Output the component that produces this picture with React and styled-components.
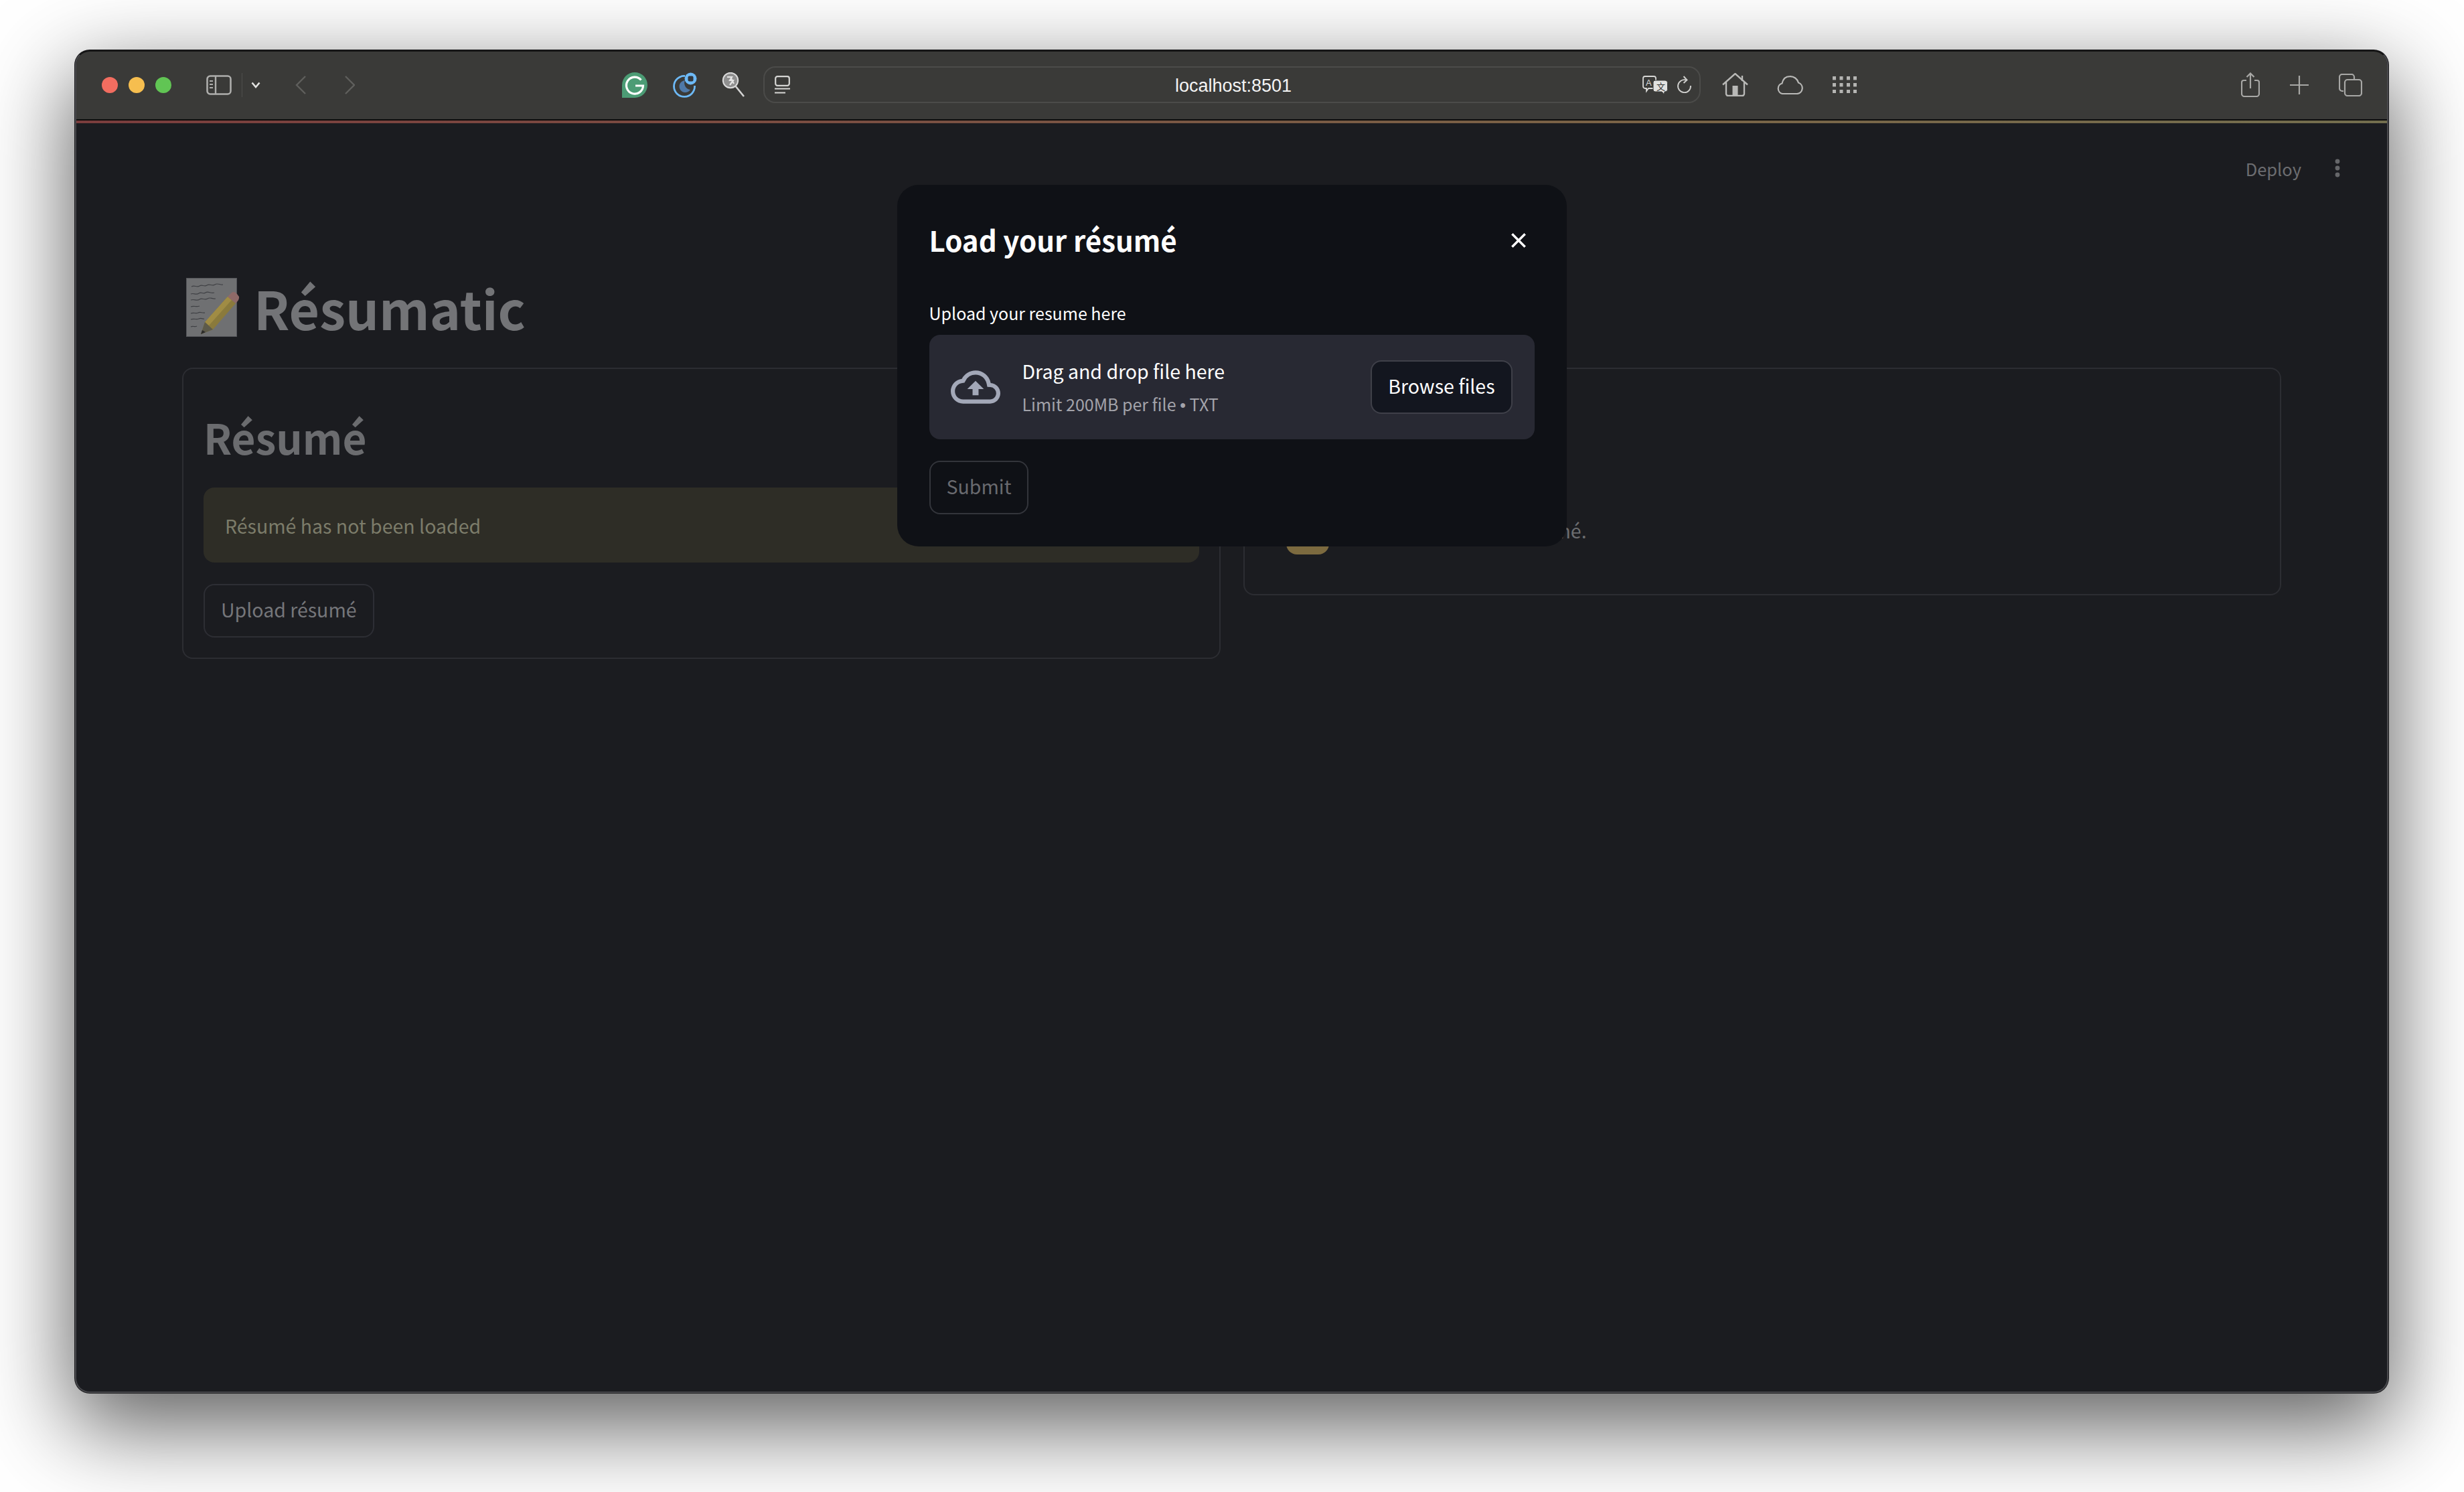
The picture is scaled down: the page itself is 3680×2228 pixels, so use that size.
import React from 'react';
import styled, { createGlobalStyle } from 'styled-components';

const GlobalStyle = createGlobalStyle`
  html, body {
    margin: 0;
    padding: 0;
    background: #fff;
  }
  * {
    box-sizing: border-box;
  }
  body {
    font-family: "Noto Sans CJK SC", "Noto Sans", sans-serif;
    -webkit-font-smoothing: antialiased;
  }
`;

const Stage = styled.div`
  width: 3680px;
  height: 2228px;
  padding: 75px 113px 148px 112px;
  overflow: hidden;
`;

const Window = styled.div`
  height: 100%;
  display: flex;
  flex-direction: column;
  position: relative;
  background: #1b1c20;
  border: 2px solid #48484c;
  border-top-color: #141414;
  border-radius: 22px;
  box-shadow: 0 0 0 1px #1c1c1e, 0 44px 130px 8px rgba(0, 0, 0, 0.62);
  overflow: hidden;
`;

const Toolbar = styled.header`
  flex: none;
  height: 103px;
  display: flex;
  align-items: center;
  padding: 0 36px 2px 38px;
  background: #3a3a38;
  border-bottom: 2px solid #0c0c0c;
`;

const Lights = styled.div`
  display: flex;
  gap: 16px;
`;

const Light = styled.span`
  width: 24px;
  height: 24px;
  border-radius: 50%;
  background: ${({ $color }) => $color};
`;

const ToolIcon = styled.svg`
  flex: none;
  display: block;
  margin-left: ${({ $gap }) => $gap || 0}px;
`;

const Separator = styled.span`
  flex: none;
  width: 1px;
  height: 36px;
  margin-left: 15px;
  background: #4e4e4c;
`;

const AddressBar = styled.div`
  flex: none;
  width: 1400px;
  height: 55px;
  margin-left: 28px;
  padding: 0 11px 0 15px;
  display: grid;
  grid-template-columns: 1fr auto 1fr;
  align-items: center;
  border: 2px solid #4b4b49;
  border-radius: 18px;
`;

const Url = styled.span`
  padding-top: 3px;
  font-family: "Liberation Sans", Arial, sans-serif;
  font-size: 27px;
  color: #f4f4f4;
`;

const AddressEnd = styled.div`
  display: flex;
  justify-content: flex-end;
  align-items: center;
`;

const Decoration = styled.div`
  flex: none;
  height: 4px;
  background: linear-gradient(90deg, #7b3d3d 0%, #7a4f42 35%, #7a6246 65%, #736e4e 100%);
`;

const Page = styled.main`
  flex: 1;
  min-height: 0;
  padding: 0 158px;
  color: #6c6d70;
`;

const TopBar = styled.div`
  height: 134px;
  margin-right: -158px;
  padding-right: 70px;
  display: flex;
  justify-content: flex-end;
  align-items: center;
  gap: 50px;
  font-size: 25.5px;
  color: #6c6d70;
`;

const TitleRow = styled.div`
  height: 142px;
  margin-top: 70px;
  margin-bottom: 19px;
  display: flex;
  align-items: center;
  gap: 21px;
  padding-left: 6px;
`;

const Title = styled.h1`
  margin: 0;
  font-size: 78.5px;
  line-height: 142px;
  font-weight: 700;
  color: #737477;
`;

const Columns = styled.div`
  display: grid;
  grid-template-columns: 1fr 1fr;
  gap: 34px;
  align-items: start;
`;

const Card = styled.section`
  display: flex;
  flex-direction: column;
  height: ${({ $height }) => $height}px;
  justify-content: flex-end;
  padding: 0 30px 30px;
  border: 2px solid #2c2d32;
  border-radius: 16px;
`;

const CardTitle = styled.h2`
  margin: 0 0 26px;
  font-size: 62px;
  line-height: 100px;
  font-weight: 700;
  color: #6b6c6f;
`;

const Alert = styled.div`
  height: 112px;
  margin-bottom: 32px;
  padding: 0 32px;
  display: flex;
  align-items: center;
  background: #2e2d26;
  border-radius: 16px;
  font-size: 28.5px;
  color: #7c7c6a;
`;

const Button = styled.button`
  flex: none;
  align-self: ${({ $center }) => ($center ? 'center' : 'flex-start')};
  height: 80px;
  padding: 0 24px 3px;
  background: ${({ $bg }) => $bg || 'transparent'};
  border: 2px solid ${({ $line }) => $line || '#2d2e34'};
  border-radius: 16px;
  font-family: inherit;
  font-size: 28.5px;
  line-height: 1;
  color: ${({ $color }) => $color || '#75767a'};
`;

const ChatRow = styled.div`
  display: flex;
  align-items: center;
  gap: 53px;
  margin: 0 0 29px 32px;
  font-size: 28.5px;
  line-height: 48px;
`;

const Avatar = styled.div`
  width: 64px;
  height: 64px;
  background: #7c6a3f;
  border-radius: 16px;
`;

const ChatText = styled.span`
  padding-bottom: 8px;
`;

const Modal = styled.div`
  position: absolute;
  top: 199px;
  left: 50%;
  transform: translateX(-50%);
  width: 1000px;
  height: 540px;
  padding: 48px 48px 48px;
  display: flex;
  flex-direction: column;
  background: #0f1116;
  border-radius: 32px;
  color: #fff;
`;

const ModalHead = styled.div`
  display: flex;
  justify-content: space-between;
  align-items: center;
  margin-bottom: 55px;
`;

const ModalTitle = styled.h3`
  margin: 0;
  font-size: 42px;
  line-height: 68px;
  font-weight: 700;
`;

const CloseIcon = styled.svg`
  margin: 2px 6px 0 0;
  fill: #fff;
  stroke: #fff;
  stroke-width: 0.5;
`;

const FieldLabel = styled.label`
  font-size: 25px;
  line-height: 40px;
  margin-bottom: 13px;
`;

const DropZone = styled.div`
  height: 156px;
  margin-bottom: 32px;
  padding: 0 33px 0 32px;
  display: flex;
  align-items: center;
  gap: 33px;
  background: #282933;
  border-radius: 16px;
`;

const DropText = styled.div`
  flex: 1;
  display: flex;
  flex-direction: column;
  gap: 7px;
`;

const DropTitle = styled.span`
  font-size: 28.5px;
  line-height: 44px;
`;

const DropHint = styled.span`
  font-size: 25px;
  line-height: 40px;
  color: #a3a3aa;
`;

const Bullet = styled.span`
  font-family: "Liberation Sans", Arial, sans-serif;
`;

const Shell = ({ children, w, h, gap, box }) => (
  <ToolIcon width={w} height={h} viewBox={box || `0 0 ${w} ${h}`} $gap={gap} fill="none">
    {children}
  </ToolIcon>
);

const MemoEmoji = () => (
  <svg width="80" height="88" viewBox="0 0 80 88">
    <rect x="0.5" y="0.5" width="75" height="87" fill="#6f7072" stroke="#55565a" />
    <g stroke="#3f4044" strokeWidth="1.2" fill="none">
      <path d="M8 13c5-3 8 2 12-1s7 2 11-1 8 2 12-1 8 1 12 0" />
      <path d="M7 24c4-2 8 2 12-1s6 2 10-1 8 2 13 0" />
      <path d="M7 33c5-2 9 2 13-1s7 2 12-1 6 1 12 0" />
      <path d="M7 43c5-2 8 1 13-1" />
      <path d="M7 53c4-2 8 1 11-1s6 1 10 0" />
      <path d="M7 62c5-2 8 1 12-1s6 1 8 0" />
      <path d="M7 73c3-2 6 1 9-1" />
    </g>
    <path d="M22 84 L28 66 L62 28 L74 38 L40 77 Z" fill="#8a7a3c" />
    <path d="M28 66 L62 28 L68 33 L34 71 Z" fill="#a08c44" />
    <path d="M62 28 L68 22 Q72 19 76 24 L79 28 Q80 32 74 38 Z" fill="#8f6a68" />
    <path d="M22 84 L28 66 L40 77 Z" fill="#5d5a4a" />
    <path d="M22 84 L24 78 L29 81 Z" fill="#2b2b2b" />
  </svg>
);

const SidebarIcon = () => (
  <Shell w={38} h={30} gap={52}>
    <rect x="1.5" y="1.5" width="35" height="27" rx="4.5" stroke="#aeaeac" strokeWidth="2.6" />
    <path d="M14 2v26" stroke="#aeaeac" strokeWidth="2.4" />
    <path d="M5 9h5M5 14h5M5 19h5" stroke="#aeaeac" strokeWidth="2" />
  </Shell>
);

const GrammarlyIcon = () => (
  <Shell w={38} h={38} gap={399}>
    <path d="M0 38V19A19 19 0 1 1 19 38Z" fill="#4c9c75" />
    <path d="M28.5 11.5A12.5 12.5 0 1 0 31.5 20H20" stroke="#fff" strokeWidth="3.2" />
  </Shell>
);

const DarkModeIcon = () => (
  <Shell w={38} h={38} gap={36}>
    <path d="M20 5.5A15.5 15.5 0 1 0 34.5 20" stroke="#6db9f6" strokeWidth="2.8" />
    <path d="M20 12A9 9 0 1 0 28 26A10 10 0 0 1 20 12Z" fill="#4f79a8" />
    <circle cx="28.5" cy="9.5" r="9" fill="#6db9f6" />
    <rect x="24.5" y="5.5" width="8" height="8" rx="2" fill="#33383e" />
  </Shell>
);

const LensIcon = () => (
  <Shell w={34} h={37} gap={37}>
    <circle cx="13" cy="12" r="11.2" fill="#8f8f8f" stroke="#dcdcdc" strokeWidth="2" />
    <path d="M8 7h7l-3 5h5l-5 7M14 9l4 8" stroke="#e4e4e4" strokeWidth="2.2" fill="none" />
    <path d="M20 20L33 36" stroke="#d4d4d4" strokeWidth="2.6" />
  </Shell>
);

const ReaderIcon = () => (
  <Shell w={23} h={27}>
    <rect x="1.2" y="1.2" width="20.6" height="13.6" rx="3" stroke="#d6d6d4" strokeWidth="2.2" />
    <path d="M0 19.5h23" stroke="#d6d6d4" strokeWidth="2.2" />
    <path d="M0 25.5h16" stroke="#d6d6d4" strokeWidth="2.2" />
  </Shell>
);

const TranslateIcon = () => (
  <Shell w={38} h={28}>
    <path d="M4 1h13a3 3 0 0 1 3 3v12a3 3 0 0 1-3 3H9l-3 4v-4H4a3 3 0 0 1-3-3V4a3 3 0 0 1 3-3Z" stroke="#d8d8d6" strokeWidth="1.8" />
    <text x="5" y="15" fontSize="13" fontFamily="Liberation Sans, sans-serif" fill="#d8d8d6">A</text>
    <path d="M19 7h15a3.5 3.5 0 0 1 3.5 3.5v10a3.5 3.5 0 0 1-3.5 3.5h-1l-.5 4-3.5-4H19a3 3 0 0 1-3-3v-11a3 3 0 0 1 3-3Z" fill="#e2e2e0" stroke="#3a3a38" strokeWidth="1" />
    <text x="21" y="21" fontSize="13" fontFamily="Noto Sans CJK SC, sans-serif" fill="#3a3a38">文</text>
  </Shell>
);

const ReloadIcon = () => (
  <Shell w={23} h={27} gap={13}>
    <path d="M14 6.5A9.5 9.5 0 1 0 21 15" stroke="#d0d0ce" strokeWidth="1.9" />
    <path d="M10.5 1L15.5 6.5L10.5 11" stroke="#d0d0ce" strokeWidth="1.9" />
  </Shell>
);

const HomeIcon = () => (
  <Shell w={39} h={35} gap={32}>
    <path d="M1 17.5L19.5 1L38 17.5" stroke="#b9b9b7" strokeWidth="2.4" />
    <path d="M30 4v8" stroke="#b9b9b7" strokeWidth="2.4" />
    <path d="M6 14v17a3 3 0 0 0 3 3h21a3 3 0 0 0 3-3V14" stroke="#b9b9b7" strokeWidth="2.4" />
    <rect x="15.5" y="19" width="8" height="15" fill="#b9b9b7" />
  </Shell>
);

const CloudIcon = () => (
  <Shell w={41} h={28} gap={42}>
    <path d="M9 27H31A8.5 8.5 0 0 0 33 10.5 12.5 12.5 0 0 0 20 1.2C14 1.2 10 5 8.5 11.5A8 8 0 0 0 9 27Z" stroke="#b9b9b7" strokeWidth="2.2" />
  </Shell>
);

const GridIcon = () => (
  <Shell w={36} h={25} gap={43}>
    <g fill="#b4b4b2">
      {[0, 10, 20].map((y) =>
        [0, 10.5, 21, 31].map((x) => <rect key={`${x}-${y}`} x={x} y={y} width="5" height="5.4" />)
      )}
    </g>
  </Shell>
);

const ShareIcon = () => (
  <Shell w={28} h={37} gap={574}>
    <path d="M8 12H4a3 3 0 0 0-3 3v17a4 4 0 0 0 4 4h18a4 4 0 0 0 4-4V15a3 3 0 0 0-3-3h-4" stroke="#a8a8a6" strokeWidth="2.2" />
    <path d="M14 24V1.5M8.5 7L14 1.5L19.5 7" stroke="#a8a8a6" strokeWidth="2.2" />
  </Shell>
);

const PlusIcon = () => (
  <Shell w={28} h={28} gap={45}>
    <path d="M14 0v28M0 14h28" stroke="#a8a8a6" strokeWidth="2.2" />
  </Shell>
);

const TabsIcon = () => (
  <Shell w={35} h={34} gap={45}>
    <path d="M7 26H5a4 4 0 0 1-4-4V5a4 4 0 0 1 4-4h14a4 4 0 0 1 4 4v3" stroke="#a8a8a6" strokeWidth="2.2" />
    <rect x="9" y="9" width="25" height="24" rx="4" stroke="#a8a8a6" strokeWidth="2.2" />
  </Shell>
);

const UploadCloud = () => (
  <svg width="74" height="74" viewBox="0 0 24 24" fill="#a3a8b8">
    <path d="M19.35 10.04A7.49 7.49 0 0 0 12 4C9.11 4 6.6 5.64 5.35 8.04A5.994 5.994 0 0 0 0 14c0 3.31 2.69 6 6 6h13c2.76 0 5-2.24 5-5 0-2.64-2.05-4.78-4.65-4.96zM19 18H6c-2.21 0-4-1.79-4-4 0-2.05 1.53-3.76 3.56-3.97l1.07-.11.5-.95A5.469 5.469 0 0 1 12 6c2.62 0 4.88 1.86 5.39 4.43l.3 1.5 1.53.11A2.98 2.98 0 0 1 22 15c0 1.65-1.35 3-3 3zM8 13h2.55v3h2.9v-3H16l-4-4z" />
  </svg>
);

export default function App() {
  return (
    <>
      <GlobalStyle />
      <Stage>
        <Window>
          <Toolbar>
            <Lights>
              <Light $color="#f26d60" />
              <Light $color="#f6be4f" />
              <Light $color="#61c554" />
            </Lights>
            <SidebarIcon />
            <Separator />
            <Shell w={14} h={10} gap={13}>
              <path d="M1.5 1.5L7 8L12.5 1.5" stroke="#e2e2e0" strokeWidth="2.6" />
            </Shell>
            <Shell w={17} h={28} gap={52}>
              <path d="M15 1L2 14L15 27" stroke="#5f5f5d" strokeWidth="2.4" />
            </Shell>
            <Shell w={16} h={28} gap={56}>
              <path d="M2 1L15 14L2 27" stroke="#5f5f5d" strokeWidth="2.4" />
            </Shell>
            <GrammarlyIcon />
            <DarkModeIcon />
            <LensIcon />
            <AddressBar>
              <ReaderIcon />
              <Url>localhost:8501</Url>
              <AddressEnd>
                <TranslateIcon />
                <ReloadIcon />
              </AddressEnd>
            </AddressBar>
            <HomeIcon />
            <CloudIcon />
            <GridIcon />
            <ShareIcon />
            <PlusIcon />
            <TabsIcon />
          </Toolbar>
          <Decoration />
          <Page>
            <TopBar>
              <span>Deploy</span>
              <svg width="8" height="28" viewBox="0 0 8 28" fill="#66676a">
                <circle cx="4" cy="4" r="3.4" />
                <circle cx="4" cy="14" r="3.4" />
                <circle cx="4" cy="24" r="3.4" />
              </svg>
            </TopBar>
            <TitleRow>
              <MemoEmoji />
              <Title>Résumatic</Title>
            </TitleRow>
            <Columns>
              <Card $height={435}>
                <CardTitle>Résumé</CardTitle>
                <Alert>Résumé has not been loaded</Alert>
                <Button>Upload résumé</Button>
              </Card>
              <Card $height={340}>
                <ChatRow>
                  <Avatar />
                  <ChatText>Please load your résumé.</ChatText>
                </ChatRow>
              </Card>
            </Columns>
          </Page>
          <Modal>
            <ModalHead>
              <ModalTitle>Load your résumé</ModalTitle>
              <CloseIcon width="36" height="36" viewBox="0 0 24 24">
                <path d="M19 6.41 17.59 5 12 10.59 6.41 5 5 6.41 10.59 12 5 17.59 6.41 19 12 13.41 17.59 19 19 17.59 13.41 12z" />
              </CloseIcon>
            </ModalHead>
            <FieldLabel>Upload your resume here</FieldLabel>
            <DropZone>
              <UploadCloud />
              <DropText>
                <DropTitle>Drag and drop file here</DropTitle>
                <DropHint>Limit 200MB per file <Bullet>•</Bullet> TXT</DropHint>
              </DropText>
              <Button $center $bg="#13161f" $line="#3f4049" $color="#fff">Browse files</Button>
            </DropZone>
            <Button $line="#33353b" $color="#696a6f">Submit</Button>
          </Modal>
        </Window>
      </Stage>
    </>
  );
}
